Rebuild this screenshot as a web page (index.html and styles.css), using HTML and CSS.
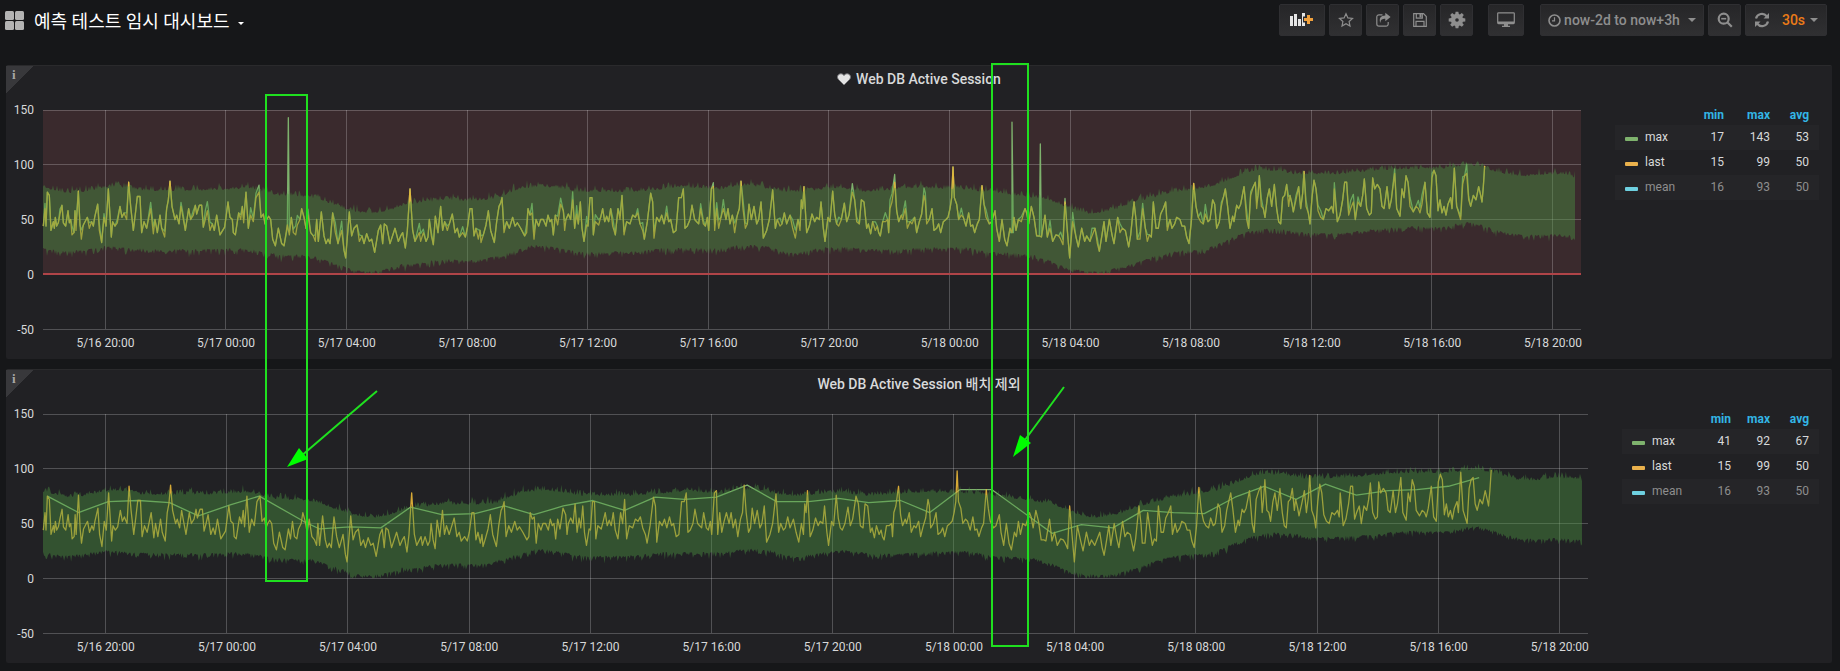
FILE: index.html
```html
<!DOCTYPE html>
<html lang="ko">
<head>
    <meta charset="UTF-8">
    <meta name="viewport" content="width=device-width, initial-scale=1.0">
    <title>예측 테스트 임시 대시보드</title>
    <link rel="stylesheet" href="styles.css">
</head>
<body>
    <header class="navbar">
        <button class="dash-title" type="button">
            <svg class="dash-icon" viewBox="0 0 19 19" aria-hidden="true">
                <rect x="0" y="0" width="9" height="9" rx="1.5"/><rect x="10" y="0" width="9" height="9" rx="1.5"/>
                <rect x="0" y="10" width="9" height="9" rx="1.5"/><rect x="10" y="10" width="9" height="9" rx="1.5"/>
            </svg>
            <span>예측 테스트 임시 대시보드</span>
            <i class="caret caret-small"></i>
        </button>
        <nav class="toolbar">
            <button class="btn btn-add" type="button" aria-label="Add panel">
                <svg width="24" height="16" viewBox="0 0 24 16">
                    <path fill="#e6e6e6" d="M0 4h3v10H0zM4 2h3v12H4zM8 7h3v7H8zM12 1h3v3.500h-2v6h2V14h-3z"/>
                    <path fill="#f0a03c" d="M17 3h3v3h3v3h-3v3h-3V9h-3V6h3z"/>
                </svg>
            </button>
            <button class="btn" type="button" aria-label="Star">
                <svg width="16" height="16" viewBox="0 0 16 16"><path class="line" d="M8 1.700l1.900 4.200 4.600.5-3.400 3.100.9 4.600L8 11.800l-4 2.300.9-4.600L1.500 6.400l4.600-.5z"/></svg>
            </button>
            <button class="btn" type="button" aria-label="Share">
                <svg width="16" height="16" viewBox="0 0 16 16">
                    <path class="line" d="M7.500 2.800H4A2.200 2.200 0 0 0 1.800 5v7A2.200 2.200 0 0 0 4 14.200h7a2.200 2.200 0 0 0 2.200-2.200v-2"/>
                    <path d="M10.300.8L15.600 5l-5.300 4.200V6.700c-3 0-4.600.7-4.900 4.300C3.600 6.500 5.700 3.400 10.300 3.400z"/>
                </svg>
            </button>
            <button class="btn" type="button" aria-label="Save">
                <svg width="16" height="16" viewBox="0 0 16 16">
                    <path class="line" d="M1.700 1.700h9.800l2.800 2.800v9.800H1.700zM4 14V9.300h8V14M4.300 2v4.200h6V2"/>
                    <path d="M7.500 2h2v3.500h-2z"/>
                </svg>
            </button>
            <button class="btn" type="button" aria-label="Settings">
                <svg width="18" height="18" viewBox="0 0 18 18">
                    <path fill-rule="evenodd" d="M7.600.7h2.800l.4 2.300 1.100.5 1.900-1.400 2 2-1.400 1.900.5 1.100 2.400.4v2.900l-2.400.4-.5 1.100 1.400 1.900-2 2-1.900-1.400-1.100.5-.4 2.400H7.600l-.4-2.400-1.100-.5-1.900 1.400-2-2 1.400-1.900-.5-1.100-2.400-.4V7.500l2.400-.4.5-1.100-1.400-1.900 2-2 1.900 1.400 1.100-.5zM9 7.200a1.800 1.800 0 1 0 0 3.600 1.800 1.800 0 0 0 0-3.600z"/>
                </svg>
            </button>
            <button class="btn btn-tv" type="button" aria-label="Cycle view mode">
                <svg width="18" height="16" viewBox="0 0 18 16">
                    <path class="line" d="M1.500.8h15q.8 0 .8.8v9.200q0 .8-.8.8h-15q-.8 0-.8-.8V1.600q0-.8.800-.8z"/>
                    <path d="M1 9.500h16v2.300H1zM7 12h4v1.700h2V15H5v-1.300h2z"/>
                </svg>
            </button>
            <button class="btn btn-time" type="button">
                <svg width="13" height="13" viewBox="0 0 13 13"><circle class="line line-thick" cx="6.500" cy="6.500" r="5.500"/><path class="line" d="M6.500 3.300v3.600H4"/></svg>
                <span>now-2d to now+3h</span>
                <i class="caret"></i>
            </button>
            <button class="btn" type="button" aria-label="Zoom out">
                <svg width="16" height="16" viewBox="0 0 16 16"><circle class="line line-bold" cx="6.700" cy="6.700" r="5"/><path class="line line-bold" d="M10.500 10.500l4.300 4.300"/><path class="line line-thick" d="M4.200 6.700h5"/></svg>
            </button>
            <button class="btn btn-refresh" type="button">
                <svg width="16" height="16" viewBox="0 0 16 16">
                    <path class="line line-bold" d="M2 6.500a6.100 6.100 0 0 1 10.700-2.300M14 9.500a6.100 6.100 0 0 1-10.700 2.300"/>
                    <path d="M15 1v5.500H9.500zM1 15V9.500h5.500z"/>
                </svg>
                <span class="interval">30s</span>
                <i class="caret"></i>
            </button>
        </nav>
    </header>

    <main class="dashboard">
        <section class="panel">
            <span class="panel-info"><b>i</b></span>
            <h2 class="panel-title">
                <svg class="heart" width="14" height="13" viewBox="0 0 14 13" aria-hidden="true">
                    <path d="M7 12L1.300 6.300C-.8 3.500 1.500.7 4 .8 5.300.8 6.300 1.500 7 2.500 7.700 1.500 8.700.8 10 .8c2.500-.1 4.800 2.700 2.700 5.500z"/>
                </svg>
                Web DB Active Session
            </h2>
            <div class="panel-body">
                <div class="y-axis"><span>150</span><span>100</span><span>50</span><span>0</span><span>-50</span></div>
                <div class="graph">
                    <svg class="plot" id="plot-all" viewBox="0 0 4614 200" preserveAspectRatio="none"></svg>
                    <div class="x-axis"></div>
                </div>
                <div class="legend">
                    <table class="legend-wide">
                        <thead><tr><th class="name"></th><th>min</th><th>max</th><th>avg</th></tr></thead>
                        <tbody>
                            <tr><td class="name"><i class="swatch max"></i>max</td><td>17</td><td>143</td><td>53</td></tr>
                            <tr><td class="name"><i class="swatch last"></i>last</td><td>15</td><td>99</td><td>50</td></tr>
                            <tr class="off"><td class="name"><i class="swatch mean"></i>mean</td><td>16</td><td>93</td><td>50</td></tr>
                        </tbody>
                    </table>
                </div>
            </div>
        </section>

        <section class="panel">
            <span class="panel-info"><b>i</b></span>
            <h2 class="panel-title">Web DB Active Session 배치 제외</h2>
            <div class="panel-body">
                <div class="y-axis"><span>150</span><span>100</span><span>50</span><span>0</span><span>-50</span></div>
                <div class="graph">
                    <svg class="plot" id="plot-nobatch" viewBox="0 0 4614 200" preserveAspectRatio="none"></svg>
                    <div class="x-axis"></div>
                </div>
                <div class="legend">
                    <table>
                        <thead><tr><th class="name"></th><th>min</th><th>max</th><th>avg</th></tr></thead>
                        <tbody>
                            <tr><td class="name"><i class="swatch max"></i>max</td><td>41</td><td>92</td><td>67</td></tr>
                            <tr><td class="name"><i class="swatch last"></i>last</td><td>15</td><td>99</td><td>50</td></tr>
                            <tr class="off"><td class="name"><i class="swatch mean"></i>mean</td><td>16</td><td>93</td><td>50</td></tr>
                        </tbody>
                    </table>
                </div>
            </div>
        </section>
    </main>

    <!-- batch windows marked over both panels -->
    <svg class="marks" viewBox="0 0 1840 671" preserveAspectRatio="none" aria-hidden="true">
        <rect x="266" y="95" width="41" height="486"/>
        <rect x="992" y="64" width="36" height="582"/>
        <path d="M377 391L300 457M1064 387L1022 444"/>
        <path class="head" d="M287 467L299 448L308 459ZM1013 457L1020 435L1031 443Z"/>
    </svg>
    <script src="charts.js"></script>
</body>
</html>
```
FILE: styles.css
```css
* {
    box-sizing: border-box;
}
body {
    margin: 0;
    min-height: 100vh;
    background: #161719;
    color: #d8d9da;
    font-family: Roboto, "Noto Sans CJK KR", sans-serif;
    font-size: 12px;
}
button {
    font-family: inherit;
    border: 0;
    background: none;
    cursor: pointer;
}
svg {
    display: block;
}

/* top bar */
.navbar {
    display: flex;
    justify-content: space-between;
    align-items: flex-start;
    height: 65px;
    padding: 4px 13px 0 5px;
}
.dash-title {
    display: flex;
    align-items: center;
    height: 32px;
    padding: 0;
    color: #fff;
    font-size: 18px;
}
.dash-icon {
    width: 19px;
    height: 19px;
    margin-right: 10px;
    fill: #b3b3b3;
}
.caret {
    width: 0;
    height: 0;
    border: 4px solid transparent;
    border-top-color: currentColor;
    border-bottom: 0;
    margin-left: 8px;
}
.caret-small {
    border-width: 3px;
    border-bottom: 0;
    margin-top: 6px;
}
.toolbar {
    display: flex;
    gap: 4px;
}
.btn {
    display: flex;
    align-items: center;
    justify-content: center;
    width: 33px;
    height: 32px;
    padding: 0;
    border: 1px solid #2f2f32;
    border-radius: 2px;
    background: linear-gradient(#262628, #303032);
    color: #8e8e8e;
    font-size: 14px;
    font-weight: 500;
}
.btn svg {
    fill: #8e8e8e;
}
.btn .line {
    fill: none;
    stroke: #8e8e8e;
    stroke-width: 1.2;
}
.btn .line-thick {
    stroke-width: 1.6;
}
.btn .line-bold {
    stroke-width: 2.2;
}
.btn-add {
    width: 46px;
}
.btn-tv {
    width: 36px;
    margin: 0 12px 0 11px;
}
.btn-time {
    width: 164px;
}
.btn-time span {
    margin-left: 3px;
}
.btn-refresh {
    width: 82px;
}
.interval {
    margin-left: 12px;
    color: #eb7b18;
}
.btn-refresh .caret {
    margin-left: 5px;
}

/* panels */
.dashboard {
    display: flex;
    flex-direction: column;
    gap: 10px;
    padding: 0 8px 8px 6px;
}
.panel {
    position: relative;
    padding-bottom: 8px;
    border-top: 1px solid #2a2a2c;
    border-radius: 2px;
    background: #212124;
}
.panel-info {
    position: absolute;
    top: 0;
    left: 0;
    width: 28px;
    height: 28px;
    background: linear-gradient(135deg, #38383b 50%, transparent 50%);
}
.panel-info b {
    display: block;
    padding: 1px 0 0 6px;
    color: #a8a8a8;
    font: bold 13px/15px "Liberation Serif", serif;
}
.panel-title {
    display: flex;
    align-items: center;
    justify-content: center;
    gap: 5px;
    height: 26px;
    margin: 0;
    color: #d8d9da;
    font-size: 14px;
    font-weight: 500;
}
.heart {
    fill: #e4e4e4;
    stroke: #77777a;
    stroke-width: 1;
}
.panel-body {
    display: flex;
    padding: 18px 13px 0 0;
}
.y-axis {
    display: flex;
    flex-direction: column;
    justify-content: space-between;
    width: 28px;
    height: 234px;
    margin: -7px 9px 0 0;
    line-height: 14px;
    text-align: right;
}
.graph {
    flex: 1;
    min-width: 0;
}
.plot {
    width: 100%;
    height: 219px;
    overflow: visible;
}
.x-axis {
    display: flex;
    margin-left: 0.14%;
    padding-top: 6px;
    line-height: 16px;
}
.x-axis span {
    flex: 0 0 7.854%;
    text-align: center;
    white-space: nowrap;
}

/* chart */
.plot path,
.plot line {
    vector-effect: non-scaling-stroke;
}
.grid {
    stroke: rgba(255, 255, 255, 0.22);
    shape-rendering: crispEdges;
}
.alert-area {
    fill: rgba(234, 112, 112, 0.13);
}
.alert-line {
    stroke: #b04448;
    stroke-width: 2;
    shape-rendering: crispEdges;
}
.series {
    fill: none;
    stroke-width: 1.3;
    stroke-linejoin: round;
}
.series-max {
    stroke: #7eb26d;
}
.series-last {
    stroke: #eab839;
    stroke-opacity: 0.9;
}
.band {
    fill: rgba(76, 150, 67, 0.42);
}

/* legend */
.legend {
    padding-left: 34px;
}
.legend table {
    border-collapse: collapse;
    table-layout: fixed;
    width: 197px;
    margin-top: -3px;
}
.legend .legend-wide {
    width: 204px;
}
.legend th,
.legend td {
    width: 39px;
    height: 25px;
    padding: 0 10px 0 0;
    text-align: right;
    line-height: 15px;
}
.legend-wide th:nth-child(3) {
    width: 46px;
}
.legend th {
    height: 18px;
    padding-bottom: 2px;
    color: #33b5e5;
    font-weight: 700;
}
.legend .name {
    width: 80px;
    padding-left: 10px;
    text-align: left;
}
.legend tbody tr:nth-child(odd) {
    background: #252528;
}
.legend .off {
    color: #8e8e8e;
}
.swatch {
    display: inline-block;
    width: 13px;
    height: 4px;
    margin-right: 7px;
    border-radius: 1px;
}
.swatch.max {
    background: #7eb26d;
}
.swatch.last {
    background: #eab14c;
}
.swatch.mean {
    background: #6ed0e0;
}

.marks {
    position: absolute;
    top: 0;
    left: 0;
    width: 100%;
    height: 671px;
    fill: none;
    stroke: #1fe01f;
    stroke-width: 2;
    pointer-events: none;
}
.marks .head {
    fill: #0f0;
    stroke: none;
}
```
FILE: charts.js
```js
// x is in ticks, 4614 ticks over the 51h window. Each segment starts at its own tick.
const TICKS = 4614;

const lastData = [
    [-129, '130,44 135,60 138,44 142,75 148,72 153,40 160,48 163,42 166,52 170,44 175,47 180,55 186,63 190,47 197,44 204,58 208,47 212,50 216,36 222,38 225,58 228,40 235,76 240,45 244,32 250,45 262,52 268,42 275,48 280,44 284,52 293,64 298,40 305,29 312,52 318,44 325,78 334,34 338,48 345,44 352,47 360,62 366,52 372,56 380,50 386,84 392,62 400,40 406,55 412,71 420,71 425,38 432,48 440,42 452,60 460,37 465,50 472,38 480,54 485,42 494,34 500,60 505,68 510,85 516,62 525,50 530,54 537,46 543,62 550,50 556,40 566,60 572,50 580,54 586,63 590,55 598,63 605,63 610,43 616,50 622,58 630,40 637,46 643,40 650,54 660,36 674,43 684,66 690,52 697,50 700,38 706,36 716,56 722,50 727,62 731,47 738,75 745,42 752,54 760,48 768,70 777,75 783,52 790,55 795,46 800,50 806,53 812,50 818,32 826,26 835,42 845,28 852,26 862,45 868,36 874,52 880,38 887,36 892,45 900,50 905,60 912,52 918,42 924,54 932,38 940,35 946,30 950,50 955,30 964,57 972,35 978,28 984,32 990,28 998,56 1006,38 1014,28 1025,40 1032,22 1037,15 1048,57 1055,35 1062,42 1071,45 1078,30 1086,35 1092,28 1100,37 1108,30 1115,32 1124,20 1135,40 1142,45 1148,28 1153,46 1160,44 1170,28 1185,42 1195,30 1202,35 1208,38 1216,24 1222,40 1230,78 1238,40 1245,30 1258,38'],
    [1071, '62,30 70,38 78,30 84,34 88,50 94,35 100,27 106,53 114,38 122,62 128,40 134,48 142,40 148,46 157,55 165,38 172,42 178,34 188,38 196,34 202,42 210,60 216,60 222,35 228,42 235,32 240,40 243,29 250,36 258,45 265,58 272,40 283,29 290,48 297,62 302,65 306,70 312,38 320,48 328,42 338,52 345,44 352,47 362,42 374,35 380,38 384,60 390,54 396,56 402,32 408,50 416,44 422,50 430,50 438,44 444,54 450,48 455,50 460,36 466,54 473,45 482,64 490,58 494,40 498,50 505,55 512,50 518,68 524,42 530,55 535,46 541,66 546,42 552,30 560,45 564,44 570,70 576,70 580,36 586,48 596,45 602,52 608,60 614,48 620,53 626,48 632,60 638,44 646,36 654,60 660,50 666,72 672,36 680,48 690,46 698,54 706,52 713,56 720,46 728,40 733,32 742,48 752,74 758,66 762,33 770,52 778,48 785,54 792,46 800,56 806,48 812,50 820,38 828,40 836,70 844,70 850,78 855,42 862,44 870,50 876,63 884,50 890,48 896,46 902,60 910,46 916,44 922,52 926,40 934,78 940,80 944,40 950,60 956,42 963,52 970,60 978,50 984,60 990,46 997,54 1004,38 1012,54 1018,60 1023,85 1029,60 1036,42 1042,46 1047,64 1054,50 1062,62 1070,46 1076,50 1083,66 1090,33 1100,40 1108,50 1118,77 1126,42 1132,50 1140,44 1146,46 1153,56 1160,46 1170,54 1178,42 1186,33 1194,50 1200,40 1204,68 1208,60 1212,80 1220,38 1228,44 1236,55 1244,48 1250,52 1258,50'],
    [2271, '63,66 70,42 75,30 84,52 90,48 98,76 104,55 110,46 116,44 124,50 133,65 140,48 147,54 157,75 164,68 170,48 178,46 184,68 192,66 200,42 205,46 212,37 218,48 226,40 232,44 236,38 241,35 248,48 256,48 263,50 266,38 270,60 276,66 284,84 290,58 296,48 304,54 308,50 316,60 322,42 330,48 336,46 344,52 350,38 358,48 365,55 372,72 376,66 380,46 388,50 396,60 402,40 410,42 416,46 422,38 430,48 438,50 444,52 450,60 455,70 459,98 463,70 470,64 476,50 484,54 490,52 498,44 506,56 512,44 518,45 524,38 532,46 538,50 546,81 552,64 558,52 568,46 575,48 585,58 590,42 598,30 606,50 614,32 621,26 630,42 636,38 642,52 648,40 655,50 664,48 675,60 680,56 686,46 694,62 702,52 710,35 718,35 724,34 735,54 742,34 750,42 758,30 768,36 776,35 782,32 789,27 795,66 802,40 809,15 818,48 828,34 835,25 845,42 854,30 860,35 870,30 876,35 885,42 892,28 898,21 906,36 912,48 918,30 928,50 936,36 942,28 953,52 960,38 967,42 976,40 986,25 992,36 1002,66 1008,50 1012,32 1020,32 1028,60 1036,42 1042,30 1048,36 1054,34 1060,66 1068,42 1075,42 1082,55 1090,60 1097,66 1102,40 1110,50 1116,42 1124,46 1130,52 1140,50 1146,44 1154,44 1160,34 1167,28 1174,48 1181,83 1188,62 1195,52 1202,48 1210,46 1216,55 1224,48 1230,50 1238,68 1244,64 1250,42 1258,48'],
    [3411, '124,62 130,70 136,78 142,64 150,42 158,53 162,48 170,63 176,60 182,64 192,80 200,50 206,42 212,72 220,80 226,84 230,60 234,72 238,90 244,62 250,60 255,52 262,70 268,78 275,62 283,82 290,60 296,48 302,46 308,70 314,72 320,82 326,62 330,72 336,64 340,57 348,68 356,80 362,60 368,74 372,94 378,62 385,56 390,46 396,70 402,86 408,78 414,58 422,52 430,50 438,60 446,58 455,62 460,56 463,78 472,48 480,54 488,68 494,84 500,84 506,54 512,60 520,66 526,50 534,66 542,62 548,72 553,87 560,60 568,54 574,56 578,88 584,78 592,82 600,78 606,62 612,60 616,68 621,80 628,60 634,68 644,92 650,60 660,53 666,78 672,70 678,90 684,84 690,62 700,57 708,62 715,60 720,56 726,64 735,84 742,56 750,52 756,88 762,95 768,90 774,58 780,68 786,56 792,62 798,54 804,64 812,70 816,60 823,97 830,62 842,50 848,82 854,90 860,92 866,68 872,62 880,72 888,68 896,80 902,72 906,66 910,80 914,99']
];

const upperData = [
    [-129, '129,81 200,76 250,77 320,81 350,82 400,80 430,78 500,78 600,78 680,79 740,80 790,77 830,74 900,73 950,71 1000,65 1040,61 1080,58 1120,57 1170,60'],
    [1071, '0,64 60,67 120,69 200,69 280,70 320,75 360,80 430,82 480,80 540,77 600,77 680,77 740,78 800,80 840,81 900,80 960,79 1000,82 1050,83 1100,80 1150,77'],
    [2271, '0,77 50,79 100,80 200,77 280,79 340,80 420,80 500,79 560,77 620,75 690,72 740,70 780,65 820,60 860,57 900,58 950,61 1000,67 1050,71 1100,75'],
    [3411, '0,77 50,79 100,82 150,88 200,95 240,97 300,96 340,93 400,93 480,93 540,95 600,97 700,98 780,98 860,101 910,99 940,96 990,92 1040,91 1100,93 1160,93 1185,90']
];

const lowerData = [
    [-129, '129,22 200,19 260,21 320,24 400,22 500,21 600,21 700,22 760,21 800,18 860,16 930,16 980,11 1030,6 1060,2 1100,1 1140,2 1180,5'],
    [1071, '0,8 30,7 100,11 150,12 200,11 250,12 300,16 360,21 400,25 430,25 480,22 560,18 620,19 700,19 780,22 900,22 960,22 1020,25 1060,25 1100,24 1140,20 1190,17'],
    [2271, '0,19 60,22 120,24 200,21 300,21 400,23 500,23 560,19 620,18 700,16 740,12 800,4 850,2 900,1 950,4 1000,8 1050,14 1100,18'],
    [3411, '0,20 60,21 100,24 150,31 200,37 260,40 320,39 380,36 440,36 520,37 600,40 700,42 780,41 820,44 870,46 920,42 960,38 1000,35 1060,34 1120,35 1160,34 1185,33']
];

const hourlyMax = [
    [0, '13,75 106,60 195,70 285,71 378,69 464,57 559,67 646,75 778,52 826,45 917,47 1009,46 1098,65 1191,58 1290,59 1378,66 1466,58 1554,66 1642,71 1737,62 1828,74 1916,72 2011,74 2103,85 2191,70 2286,70 2376,73 2466,69 2561,71 2648,60 2739,81 2833,81 2951,55 3014,41 3101,49 3195,46 3286,62 3376,60 3468,59 3560,74 3647,84 3742,72 3830,86 3922,76 4017,80 4103,81 4197,84 4289,92']
];

// batch jobs, only in the first chart
const batchSpikes = [[736, 143], [2907, 139], [2992, 119]];

let seed = 7;
function rand() {
    seed = (seed * 16807) % 2147483647;
    return seed / 2147483647;
}

function expand(segments) {
    return segments.flatMap(([start, text]) =>
        text.split(' ').map(pair => {
            const [x, v] = pair.split(',').map(Number);
            return [start + x, v];
        }));
}

function valueAt(points, x) {
    for (let i = 1; i < points.length; i++) {
        if (points[i][0] >= x) {
            const [x0, v0] = points[i - 1];
            const [x1, v1] = points[i];
            return v0 + (v1 - v0) * (x - x0) / (x1 - x0);
        }
    }
    return points[points.length - 1][1];
}

function toPath(points) {
    return 'M' + points.map(([x, v]) => x.toFixed(0) + ' ' + (150 - v).toFixed(1)).join('L');
}

function bandPath() {
    const upper = expand(upperData);
    const lower = expand(lowerData);
    const top = [];
    const bottom = [];
    for (let x = 0; x <= 4596; x += 3) {
        top.push([x, valueAt(upper, x) + rand() * rand() * 8 - 2]);
        bottom.unshift([x, Math.max(0, valueAt(lower, x) + 2 - rand() * rand() * 8)]);
    }
    return toPath(top.concat(bottom)) + 'Z';
}

function maxWithBatch(last) {
    const points = last.map(([x, v]) => [x, rand() > 0.8 ? v + 3 + rand() * 6 : v]);
    batchSpikes.forEach(([x, v]) => {
        const base = valueAt(last, x);
        points.push([x - 4, base], [x, v], [x + 4, base]);
    });
    return points.sort((a, b) => a[0] - b[0]);
}

function gridLines() {
    let html = '';
    for (let y = 0; y <= 200; y += 50) {
        html += `<line class="grid" x1="0" x2="${TICKS}" y1="${y}" y2="${y}"/>`;
    }
    for (let i = 0; i < 13; i++) {
        const x = 187 + i * 361.8;
        html += `<line class="grid" x1="${x}" x2="${x}" y1="0" y2="200"/>`;
    }
    return html;
}

function draw(id, maxPoints, last, withAlert) {
    let html = '';
    if (withAlert) {
        html += `<rect class="alert-area" width="${TICKS}" height="150"/>`;
    }
    html += gridLines();
    if (withAlert) {
        html += `<line class="alert-line" x1="0" x2="${TICKS}" y1="150" y2="150"/>`;
    }
    html += `<path class="series series-max" d="${toPath(maxPoints)}"/>`;
    html += `<path class="series series-last" d="${toPath(last)}"/>`;
    html += `<path class="band" d="${bandPath()}"/>`;
    document.getElementById(id).innerHTML = html;
}

const last = expand(lastData);
draw('plot-all', maxWithBatch(last), last, true);
draw('plot-nobatch', expand(hourlyMax), last, false);

const labels = [];
for (let h = 20; h <= 68; h += 4) {
    labels.push('5/' + (16 + Math.floor(h / 24)) + ' ' + String(h % 24).padStart(2, '0') + ':00');
}
document.querySelectorAll('.x-axis').forEach(axis => {
    axis.innerHTML = labels.map(text => `<span>${text}</span>`).join('');
});
```
